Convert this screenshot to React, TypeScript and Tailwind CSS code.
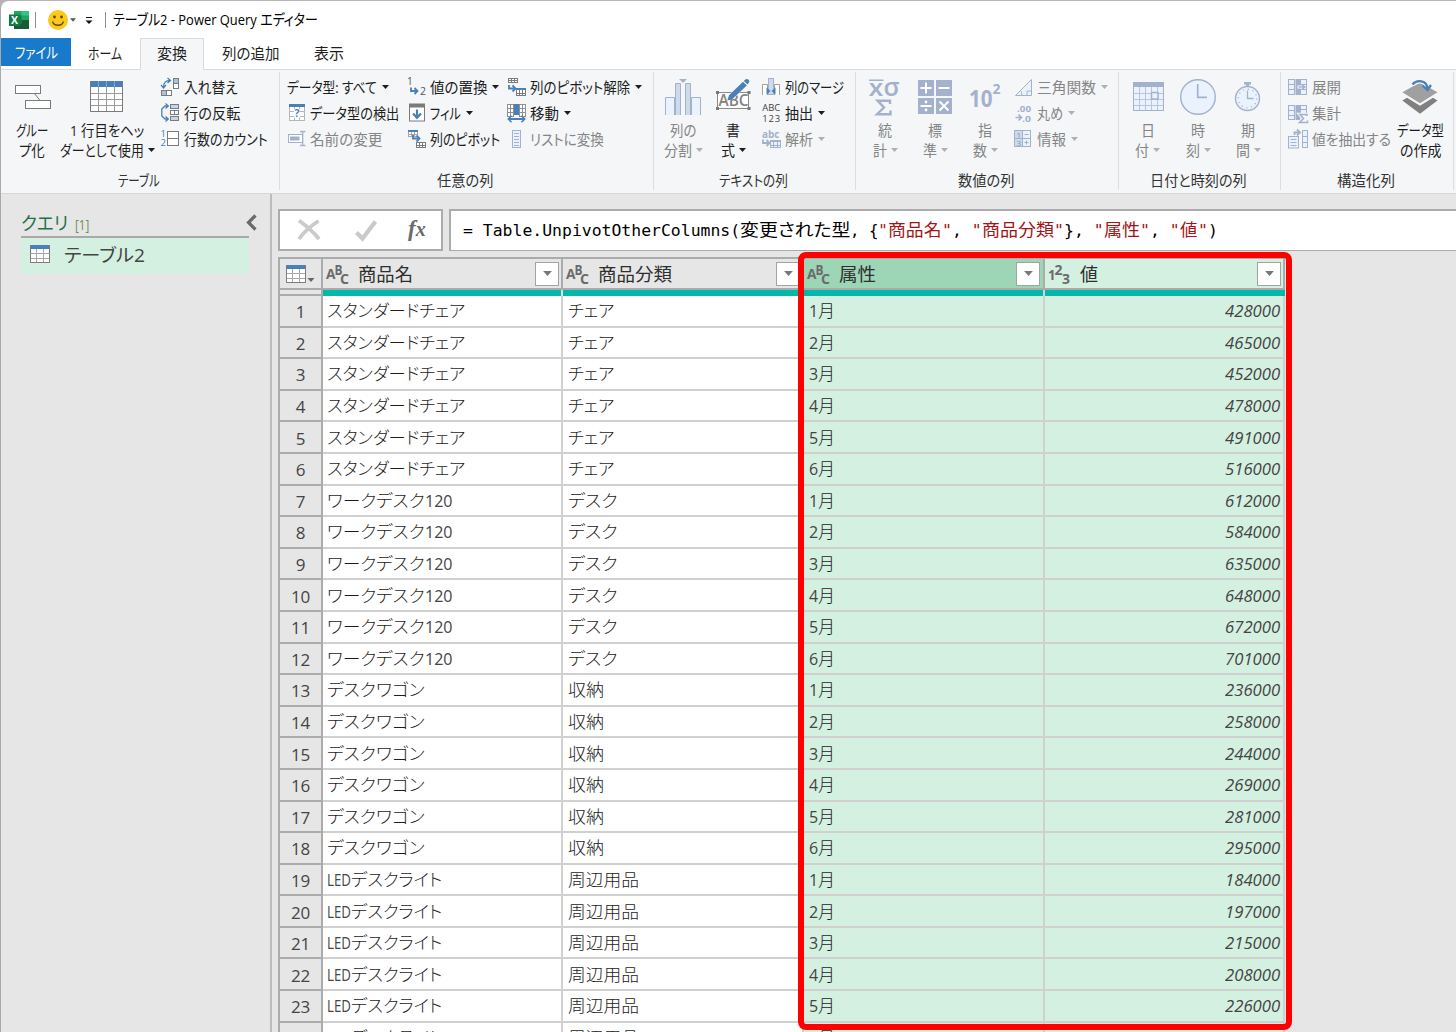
import { useLayoutEffect, useRef, useState } from "react";
import type { ReactNode } from "react";
import clsx from "clsx";

const BLUE = "#4a80b8";
const MUTED = "#a3b1cc";
const PALE = "#eaf3fd";
const GRAY = "#7b7b7b";

// squeezes or stretches its text to the width given by className
const Fit = ({ className, children }: { className?: string; children: ReactNode }) => {
  const outer = useRef<HTMLSpanElement>(null);
  const inner = useRef<HTMLSpanElement>(null);
  const [scale, setScale] = useState(1);

  useLayoutEffect(() => {
    if (outer.current && inner.current && inner.current.offsetWidth > 0) {
      setScale(outer.current.clientWidth / inner.current.offsetWidth);
    }
  }, []);

  return (
    <span ref={outer} className={clsx("block shrink-0 whitespace-pre", className)}>
      <span ref={inner} className="inline-block origin-left" style={{ transform: `scaleX(${scale})` }}>
        {children}
      </span>
    </span>
  );
};

const Caret = ({ className }: { className?: string }) => (
  <svg width="7" height="4" viewBox="0 0 7 4" className={clsx("shrink-0", className)}>
    <path d="M0 0h7L3.5 4z" fill="currentColor" />
  </svg>
);

type GridProps = {
  x: number;
  y: number;
  w: number;
  h: number;
  cols: number;
  rows: number;
  head?: number;
  headFill?: string;
  stroke?: string;
  fill?: string;
};

const Grid = ({ x, y, w, h, cols, rows, head = 0, headFill = BLUE, stroke = GRAY, fill = "#fff" }: GridProps) => (
  <g shapeRendering="crispEdges">
    <rect x={x + 0.5} y={y + 0.5} width={w - 1} height={h - 1} fill={fill} stroke={stroke} />
    {Array.from({ length: cols - 1 }, (_, i) => {
      const cx = x + 0.5 + ((w - 1) * (i + 1)) / cols;
      return <path key={i} d={`M${cx} ${y + head}V${y + h}`} stroke={stroke} />;
    })}
    {Array.from({ length: rows - 1 }, (_, i) => {
      const cy = y + head + ((h - head) * (i + 1)) / rows;
      return <path key={i} d={`M${x} ${cy}H${x + w}`} stroke={stroke} />;
    })}
    {head > 0 && <rect x={x} y={y} width={w} height={head} fill={headFill} />}
  </g>
);

const Svg = ({ size = 20, children }: { size?: number; children: ReactNode }) => (
  <svg width={size} height={size} viewBox={`0 0 ${size} ${size}`} fill="none" className="shrink-0 overflow-visible">
    {children}
  </svg>
);

const HookArrow = ({ x, y, color = BLUE }: { x: number; y: number; color?: string }) => (
  <g transform={`translate(${x} ${y})`} stroke={color} strokeWidth="1.8">
    <path d="M1 0v3.5h6" />
    <path d="M4.5 0.5l3 3-3 3" />
  </g>
);

const icons = {
  group: (
    <Svg size={36}>
      <path d="M20.5 14.5l5.5 7" stroke={GRAY} />
      <rect x="1.5" y="6.5" width="25" height="8" fill="#fff" stroke={GRAY} />
      <rect x="11.5" y="21.5" width="25" height="8" fill="#fff" stroke={GRAY} />
    </Svg>
  ),
  headerTable: (
    <Svg size={36}>
      <Grid x={1} y={2} w={33} h={31} cols={4} rows={4} head={6} stroke="#9a9a9a" />
      <path d="M9.5 2v6M17.5 2v6M25.5 2v6" stroke="#7fa6cf" />
      <path d="M1.5 2v30.5h32V2" stroke={GRAY} />
    </Svg>
  ),
  transpose: (
    <Svg>
      <rect x="12.5" y="1.5" width="5" height="10" fill="#fff" stroke={GRAY} />
      <rect x="12.5" y="1.5" width="5" height="5" fill="#a9c1e2" stroke={GRAY} />
      <rect x="0.5" y="13.5" width="10" height="5" fill="#fff" stroke={GRAY} />
      <rect x="0.5" y="13.5" width="5" height="5" fill="#a9c1e2" stroke={GRAY} />
      <path d="M2.5 10C2.5 6 5 3.5 9 3.5M6.5 1l3 2.5-3 2.5M0 8l2.5 3L5 8" stroke={BLUE} strokeWidth="1.3" />
    </Svg>
  ),
  reverse: (
    <Svg>
      <rect x="9.5" y="1.5" width="8" height="4" fill="#c3d5ec" stroke={GRAY} />
      <rect x="9.5" y="7.5" width="8" height="4" fill="#fff" stroke={GRAY} />
      <path d="M13.5 7.5v4" stroke={GRAY} />
      <rect x="9.5" y="13.5" width="8" height="4" fill="#c3d5ec" stroke={GRAY} />
      <path d="M7 3H4L.8 6v7L4 16h3M4.5 .5L7.3 3 4.5 5.5M4.5 13.5l2.8 2.5-2.8 2.5" stroke={BLUE} strokeWidth="1.3" />
    </Svg>
  ),
  count: (
    <Svg>
      <text x="-0.5" y="8.3" fontSize="9.5" fill={BLUE}>1</text>
      <text x="-0.5" y="17.3" fontSize="9.5" fill={BLUE}>2</text>
      <rect x="6.5" y="2.5" width="11" height="14" fill="#fff" stroke={GRAY} />
      <path d="M6.5 9.5h11" stroke={GRAY} />
    </Svg>
  ),
  detect: (
    <Svg>
      <Grid x={2} y={1} w={16} h={17} cols={3} rows={3} head={3} stroke="#b5b5b5" />
      <rect x="7" y="6" width="6" height="8.5" fill="#fff" />
      <text x="7.5" y="14" fontSize="10.5" fontWeight="700" fill={BLUE}>?</text>
    </Svg>
  ),
  rename: (
    <Svg>
      <rect x="1.5" y="5.5" width="14" height="8" fill="#fff" stroke={MUTED} />
      <path d="M3 7.5h9.5v4H3z" fill={MUTED} />
      <path d="M13 2.5h2l.7.7.7-.7h2M15.7 3v13M13 16.5h2l.7-.7.7.7h2" stroke={MUTED} strokeWidth="1.3" />
    </Svg>
  ),
  replace: (
    <Svg>
      <text x="0" y="8.3" fontSize="10" fill="#555">1</text>
      <HookArrow x={3} y={10.5} />
      <text x="13" y="18.3" fontSize="10.5" fill="#555">2</text>
    </Svg>
  ),
  fill: (
    <Svg>
      <rect x="2.5" y="1.5" width="15" height="16.5" fill="#fff" stroke={GRAY} />
      <path d="M2 .5h16v4H2z" fill={GRAY} />
      <path d="M10 6.5v8M6 10.5l4 4.3 4-4.3" stroke={BLUE} strokeWidth="2.2" />
    </Svg>
  ),
  pivot: (
    <Svg>
      <Grid x={1} y={1} w={10} h={7} cols={3} rows={2} head={2} stroke="#a9a9a9" />
      <HookArrow x={5} y={6} />
      <Grid x={9} y={13} w={10} h={6} cols={3} rows={2} stroke={GRAY} />
    </Svg>
  ),
  unpivot: (
    <Svg>
      <Grid x={1} y={1} w={10} h={5} cols={3} rows={2} stroke={GRAY} />
      <HookArrow x={1} y={8} />
      <Grid x={9} y={11} w={10} h={8} cols={3} rows={2} head={2} stroke={GRAY} />
    </Svg>
  ),
  move: (
    <Svg>
      <Grid x={0} y={1} w={7} h={13} cols={2} rows={3} stroke="#8f8f8f" />
      <Grid x={12} y={1} w={7} h={13} cols={2} rows={3} stroke="#8f8f8f" />
      <path d="M7 1h5v11H7z" fill={BLUE} />
      <path d="M1.5 16h16" stroke={BLUE} strokeWidth="1.8" />
      <path d="M4.5 12.8L1.3 16l3.2 3.2M14.5 12.8l3.2 3.2-3.2 3.2" stroke={BLUE} strokeWidth="1.6" />
    </Svg>
  ),
  list: (
    <Svg>
      <rect x="5.5" y="1.5" width="8" height="17" fill={PALE} stroke={MUTED} />
      <path d="M7 4.5h5M7 7.5h5M7 10.5h5M7 13.5h5M7 16.5h5" stroke={MUTED} />
    </Svg>
  ),
  split: (
    <Svg size={36}>
      <path d="M.5 36V18.5h9V36M26.5 36V18.5h9V36" fill={PALE} stroke={MUTED} />
      <path d="M10.5 36V4.5h5V36M20.5 36V4.5h5V36" fill="#cddaec" stroke={MUTED} />
      <path d="M14 0h8l-4 4z" fill={MUTED} />
    </Svg>
  ),
  format: (
    <Svg size={36}>
      <rect x="2.5" y="13.5" width="31" height="16" fill="#fff" stroke="#8a8a8a" />
      <path d="M1 12h3v3H1zM32.5 12h3v3h-3zM1 28h3v3H1zM32.5 28h3v3h-3z" fill="#777" />
      <text x="3.5" y="26.5" fontSize="15.5" fontWeight="600" fill="#828282" textLength="30" lengthAdjust="spacingAndGlyphs">ABC</text>
      <path d="M15.5 18.500L29 5" stroke="#f4f6f8" strokeWidth="6" />
      <path d="M12.3 21.5l1.700-5.300L28 2.800l3.800 3.700L17.500 20zM28.800 2l1.500-1.400c1-.9 2.500-.6 3.300.2s1 2.100.2 3L32.500 5.500z" fill={BLUE} />
    </Svg>
  ),
  merge: (
    <Svg>
      <path d="M.5 18V7.5h5V18M12.5 18V7.5h5V18" fill="#fff" stroke="#a0a0a0" />
      <rect x="6.500" y="1.500" width="5" height="16" fill="#cddaec" stroke={MUTED} />
      <path d="M4.500 10.500l4 3.500-4 3.500zM13.500 10.500l-4 3.500 4 3.500z" fill={BLUE} />
    </Svg>
  ),
  extract: (
    <Svg>
      <text x="0.3" y="8" fontSize="9.5" fill="#444" textLength="18" lengthAdjust="spacingAndGlyphs">ABC</text>
      <text x="0.3" y="18.7" fontSize="9.5" fill="#444" textLength="18" lengthAdjust="spacing">123</text>
    </Svg>
  ),
  parse: (
    <Svg>
      <text x="0" y="8.5" fontSize="10.5" fontWeight="700" fill={MUTED} textLength="17.5" lengthAdjust="spacingAndGlyphs">abc</text>
      <HookArrow x={0} y={10.5} color={MUTED} />
      <Grid x={8} y={11} w={11} h={8} cols={3} rows={2} head={2} headFill={MUTED} stroke={MUTED} fill={PALE} />
    </Svg>
  ),
  stats: (
    <Svg size={36}>
      <path d="M2 1.3h14.500" stroke={MUTED} strokeWidth="1.5" />
      <text x="2" y="16.5" fontSize="18.5" fontWeight="700" fill={MUTED} textLength="14" lengthAdjust="spacingAndGlyphs">X</text>
      <text x="16.5" y="16.5" fontSize="25" fontWeight="600" fill={MUTED} textLength="16" lengthAdjust="spacingAndGlyphs">σ</text>
      <path d="M23 25v-3.300H10.500l6.500 6.800-7 6.700h13.500V31.500" stroke={MUTED} strokeWidth="2.4" />
    </Svg>
  ),
  standard: (
    <Svg size={36}>
      <path d="M1 1h16v16H1zM19 1h16v16H19zM1 19h16v16H1zM19 19h16v16H19z" fill={MUTED} />
      <path d="M3.5 9h11M9 3.5v11M21.5 9h11M3.5 27h11M22.5 22.5l9 9M31.5 22.5l-9 9" stroke="#fff" strokeWidth="2" />
      <circle cx="9" cy="23" r="1.4" fill="#fff" />
      <circle cx="9" cy="31" r="1.4" fill="#fff" />
    </Svg>
  ),
  exponent: (
    <Svg size={36}>
      <text x="2" y="28.3" fontSize="22.5" fontWeight="700" fill={MUTED} textLength="23.5" lengthAdjust="spacingAndGlyphs">10</text>
      <text x="25.5" y="15" fontSize="14" fontWeight="700" fill={MUTED}>2</text>
    </Svg>
  ),
  trig: (
    <Svg>
      <path d="M1.5 18.5h16v-16z" fill={PALE} stroke={MUTED} />
      <path d="M13 18.5v-4.5h4.5M6.5 13.5c1 1 1.5 3 1.3 5" stroke={MUTED} />
    </Svg>
  ),
  rounding: (
    <Svg>
      <text x="3" y="8.5" fontSize="9.5" fontWeight="700" fill={MUTED} textLength="14" lengthAdjust="spacingAndGlyphs">.00</text>
      <text x="8" y="18.5" fontSize="9.5" fontWeight="700" fill={MUTED} textLength="9" lengthAdjust="spacingAndGlyphs">.0</text>
      <path d="M1.5 14.5h6M4.5 11.5l3 3-3 3" stroke={MUTED} strokeWidth="1.7" />
    </Svg>
  ),
  info: (
    <Svg>
      <rect x=".5" y="1.5" width="16" height="16" fill={PALE} stroke={MUTED} />
      <path d="M1 2h7.5v15H1z" fill="#cddaec" />
      <path d="M8.5 1.5v16M.5 9.5h16M10.5 5.5h4M10.5 13.5h4M12.5 11.5v4" stroke={MUTED} />
      <text x="2.5" y="8.5" fontSize="8" fill="#8094bb">1</text>
      <text x="2.5" y="16.5" fontSize="8" fill="#8094bb">3</text>
    </Svg>
  ),
  date: (
    <Svg size={36}>
      <Grid x={3} y={3} w={31} h={29} cols={5} rows={4} head={5} headFill={MUTED} stroke="#b9c5da" fill={PALE} />
      <rect x="21.5" y="13.5" width="6.5" height="6.500" fill={PALE} stroke={MUTED} strokeWidth="1.5" />
      <path d="M3.5 3v28.5h30V3" stroke={MUTED} />
    </Svg>
  ),
  time: (
    <Svg size={36}>
      <circle cx="18" cy="18" r="17.3" fill={PALE} stroke={MUTED} strokeWidth="1.4" />
      <path d="M17.7 5v13.3H27" stroke={MUTED} strokeWidth="1.7" />
    </Svg>
  ),
  duration: (
    <Svg size={36}>
      <path d="M14 3h7v2.5h-2V7h-3V5.5h-2z" fill={MUTED} />
      <circle cx="17.5" cy="19.5" r="12" fill={PALE} stroke={MUTED} strokeWidth="1.4" />
      <circle cx="17.5" cy="19.5" r="9.3" stroke={MUTED} strokeWidth="1.2" strokeDasharray="1.2 3.67" />
      <path d="M17.5 11.5v8h6" stroke={MUTED} strokeWidth="1.3" />
    </Svg>
  ),
  expand: (
    <Svg>
      <Grid x={-1} y={2} w={7} h={16} cols={1} rows={3} stroke={MUTED} fill={PALE} />
      <Grid x={11} y={2} w={7} h={16} cols={1} rows={3} stroke={MUTED} fill={PALE} />
      <path d="M6.5 2h5v16h-5z" fill={MUTED} />
      <path d="M8.5 10h7" stroke="#fff" strokeWidth="3" />
      <path d="M9.5 10h6M13 7.5l2.8 2.5-2.8 2.5" stroke={MUTED} strokeWidth="1.5" />
    </Svg>
  ),
  aggregate: (
    <Svg>
      <Grid x={-1} y={2} w={7} h={15} cols={1} rows={3} stroke={MUTED} fill={PALE} />
      <Grid x={11} y={2} w={7} h={9} cols={1} rows={2} stroke={MUTED} fill={PALE} />
      <path d="M6.5 2h5v15h-5z" fill={MUTED} />
      <path d="M18.5 13.5v-2h-7.5l3.5 4-4 4h8.5v-2" stroke="#f4f6f8" strokeWidth="3.5" />
      <path d="M18 13v-1.500h-7l3.500 4-4 4h8v-2" stroke={MUTED} strokeWidth="1.6" />
    </Svg>
  ),
  values: (
    <Svg>
      <rect x="-.5" y="7.5" width="10" height="11.5" fill={PALE} stroke={MUTED} />
      <path d="M1.5 10.5h6M1.5 13.5h6M1.5 16.5h6" stroke={MUTED} />
      <path d="M5.5 6V3.5h4.5M8 .5l3 3-3 2.800" stroke={MUTED} strokeWidth="1.8" />
      <Grid x={13} y={1} w={6} h={18} cols={1} rows={3} stroke={MUTED} fill={PALE} />
    </Svg>
  ),
  dataType: (
    <Svg size={36}>
      <path d="M.3 21.500L5 18.8l13 8 13-8 4.500 2.700L18 34.700z" fill="#808080" />
      <path d="M.3 13.3L18 3.500l17.500 9.800L18 24.300z" fill="#a0a0a0" />
      <path d="M10.5 5.500C15 .3 25 1 25.800 10" stroke="#f4f6f8" strokeWidth="4.5" />
      <path d="M10.5 5.500C15 .3 25 1 25.500 10M20.500 6.500l5 4.500 3.500-5" stroke={BLUE} strokeWidth="2.3" />
    </Svg>
  ),
  table: (
    <Svg>
      <Grid x={0} y={1} w={20} h={18} cols={3} rows={3} head={4} stroke="#a8a8a8" />
      <path d="M.5 1v17.5h19V1" stroke={GRAY} />
    </Svg>
  ),
};

type IconName = keyof typeof icons;

type SmallProps = { icon?: IconName; text: string; width: string; caret?: boolean; disabled?: boolean };

const SmallButton = ({ icon, text, width, caret, disabled }: SmallProps) => (
  <div className={clsx("flex h-[26px] items-center", disabled ? "text-[#858585]" : "text-[#1e1e1e]")}>
    {icon && <div className="w-[23px] shrink-0">{icons[icon]}</div>}
    <Fit className={width}>{text}</Fit>
    {caret && <Caret className={clsx("ml-[5px]", disabled && "text-[#b0b0b0]")} />}
  </div>
);

type BigProps = {
  icon: IconName;
  lines: [string, string];
  widths: [string, string];
  className?: string;
  caret?: boolean;
  disabled?: boolean;
};

const BigButton = ({ icon, lines, widths, className = "w-[50px]", caret, disabled }: BigProps) => (
  <div className={clsx("flex shrink-0 flex-col items-center", className, disabled ? "text-[#858585]" : "text-[#1e1e1e]")}>
    <div className="flex h-[46px] items-center">{icons[icon]}</div>
    <div className="flex h-5 items-center">
      <Fit className={widths[0]}>{lines[0]}</Fit>
    </div>
    <div className="flex h-5 items-center gap-[4px]">
      <Fit className={widths[1]}>{lines[1]}</Fit>
      {caret && <Caret className={disabled ? "text-[#b0b0b0]" : ""} />}
    </div>
  </div>
);

const RibbonGroup = ({ label, labelWidth, className, children }: { label: string; labelWidth: string; className: string; children: ReactNode }) => (
  <div className={clsx("flex h-[118px] shrink-0 flex-col border-r border-[#dcdee0] pt-0.5", className)}>
    <div className="flex h-24">{children}</div>
    <div className="flex h-[21px] items-center justify-center pr-[3px] text-[#333]">
      <Fit className={labelWidth}>{label}</Fit>
    </div>
  </div>
);

const Ribbon = () => (
  <div className="flex h-[124px] shrink-0 border-b border-[#d4d6d8] bg-[#f4f6f8] pt-0.5 text-[15px] leading-5">
    <RibbonGroup label="テーブル" labelWidth="w-[42px]" className="w-[279px]">
      <BigButton icon="group" lines={["グルー", "プ化"]} widths={["w-[32px]", "w-[26px]"]} className="ml-1.5 w-[50px]" />
      <BigButton icon="headerTable" lines={["1 行目をヘッ", "ダーとして使用"]} widths={["w-[74px]", "w-[84px]"]} className="w-[100px]" caret />
      <div className="ml-1">
        <SmallButton icon="transpose" text="入れ替え" width="w-[54px]" />
        <SmallButton icon="reverse" text="行の反転" width="w-[56px]" />
        <SmallButton icon="count" text="行数のカウント" width="w-[84px]" />
      </div>
    </RibbonGroup>
    <RibbonGroup label="任意の列" labelWidth="w-[56px]" className="w-[374px]">
      <div className="ml-[7px] w-[120px]">
        <SmallButton text="データ型: すべて" width="w-[90px]" caret />
        <SmallButton icon="detect" text="データ型の検出" width="w-[89px]" />
        <SmallButton icon="rename" text="名前の変更" width="w-[72px]" disabled />
      </div>
      <div className="w-[100px]">
        <SmallButton icon="replace" text="値の置換" width="w-[57px]" caret />
        <SmallButton icon="fill" text="フィル" width="w-[31px]" caret />
        <SmallButton icon="pivot" text="列のピボット" width="w-[70px]" />
      </div>
      <div>
        <SmallButton icon="unpivot" text="列のピボット解除" width="w-[100px]" caret />
        <SmallButton icon="move" text="移動" width="w-[29px]" caret />
        <SmallButton icon="list" text="リストに変換" width="w-[74px]" disabled />
      </div>
    </RibbonGroup>
    <RibbonGroup label="テキストの列" labelWidth="w-[69px]" className="w-[202px]">
      <BigButton icon="split" lines={["列の", "分割"]} widths={["w-[26px]", "w-[28px]"]} className="ml-1 w-[50px]" caret disabled />
      <BigButton icon="format" lines={["書", "式"]} widths={["w-[14px]", "w-[14px]"]} caret />
      <div className="ml-1">
        <SmallButton icon="merge" text="列のマージ" width="w-[59px]" />
        <SmallButton icon="extract" text="抽出" width="w-[28px]" caret />
        <SmallButton icon="parse" text="解析" width="w-[28px]" caret disabled />
      </div>
    </RibbonGroup>
    <RibbonGroup label="数値の列" labelWidth="w-[56px]" className="w-[263px]">
      <BigButton icon="stats" lines={["統", "計"]} widths={["w-[14px]", "w-[14px]"]} className="ml-1 w-[50px]" caret disabled />
      <BigButton icon="standard" lines={["標", "準"]} widths={["w-[14px]", "w-[14px]"]} caret disabled />
      <BigButton icon="exponent" lines={["指", "数"]} widths={["w-[14px]", "w-[14px]"]} caret disabled />
      <div className="ml-1">
        <SmallButton icon="trig" text="三角関数" width="w-[59px]" caret disabled />
        <SmallButton icon="rounding" text="丸め" width="w-[26px]" caret disabled />
        <SmallButton icon="info" text="情報" width="w-[29px]" caret disabled />
      </div>
    </RibbonGroup>
    <RibbonGroup label="日付と時刻の列" labelWidth="w-[97px]" className="w-[162px]">
      <BigButton icon="date" lines={["日", "付"]} widths={["w-[14px]", "w-[14px]"]} className="ml-[3px] w-[51px]" caret disabled />
      <BigButton icon="time" lines={["時", "刻"]} widths={["w-[14px]", "w-[14px]"]} caret disabled />
      <BigButton icon="duration" lines={["期", "間"]} widths={["w-[14px]", "w-[14px]"]} caret disabled />
    </RibbonGroup>
    <RibbonGroup label="構造化列" labelWidth="w-[58px]" className="w-[173px]">
      <div className="ml-2 w-[106px]">
        <SmallButton icon="expand" text="展開" width="w-[29px]" disabled />
        <SmallButton icon="aggregate" text="集計" width="w-[29px]" disabled />
        <SmallButton icon="values" text="値を抽出する" width="w-[79px]" disabled />
      </div>
      <BigButton icon="dataType" lines={["データ型", "の作成"]} widths={["w-[47px]", "w-[41px]"]} />
    </RibbonGroup>
  </div>
);

const TitleBar = () => (
  <div className="flex h-[37px] shrink-0 items-center pl-2">
    <svg width="20" height="18" viewBox="0 0 20 18">
      <path d="M5 0h15v18H5z" fill="#21a366" />
      <path d="M12.5 0H20v4.5h-7.5z" fill="#33c481" />
      <path d="M5 4.5h7.5V13H5z" fill="#107c41" />
      <path d="M5 13h15v5H5zM12.5 9H20v4h-7.5z" fill="#185c37" />
      <rect y="3.5" width="11" height="11.5" fill="#107c41" />
      <text x="2" y="13" fontSize="10.5" fontWeight="700" fill="#fff">X</text>
    </svg>
    <div className="ml-1.5 h-4 w-px bg-[#8f8f8f]" />
    <svg width="20" height="20" viewBox="0 0 20 20" className="ml-3 mt-px">
      <circle cx="10" cy="10" r="10" fill="#fcc81b" />
      <circle cx="6.5" cy="7" r="1.4" fill="#5d4a10" />
      <circle cx="13.5" cy="7" r="1.4" fill="#5d4a10" />
      <path d="M4.5 11.5c1.5 5 9.500 5 11 0" fill="none" stroke="#5d4a10" strokeWidth="1.3" />
    </svg>
    <Caret className="ml-[2px] w-[6px] text-[#555]" />
    <svg width="8" height="8" viewBox="0 0 8 8" className="ml-[9px] mt-0.5">
      <path d="M1 .5h6" stroke="#111" strokeWidth="1.2" />
      <path d="M.5 3.5h7L4 7z" fill="#111" />
    </svg>
    <div className="ml-3 h-4 w-px bg-[#8f8f8f]" />
    <Fit className="ml-[7px] w-[205px] pb-0.5 text-[15px] leading-5 text-black">テーブル2 - Power Query エディター</Fit>
  </div>
);

const Tabs = () => (
  <div className="flex h-8 shrink-0 text-[15px] leading-5 text-[#1e1e1e]">
    <div className="flex w-[70px] justify-center border-b border-[#d9dadc]">
      <div className="flex h-7 w-full items-center justify-center bg-[#1979ca] text-white">
        <Fit className="w-[43px]">ファイル</Fit>
      </div>
    </div>
    <div className="flex w-[69px] items-center justify-center border-b border-[#d9dadc] pb-0.5 pr-0.5">
      <Fit className="w-[34px]">ホーム</Fit>
    </div>
    <div className="flex w-16 items-center justify-center border-x border-t border-[#d9dadc] bg-[#f4f6f8] pb-1">
      <Fit className="w-[30px]">変換</Fit>
    </div>
    <div className="flex flex-1 items-center border-b border-[#d9dadc] pb-0.5 pl-[18px]">
      <Fit className="w-[57px]">列の追加</Fit>
      <Fit className="ml-[35px] w-[30px]">表示</Fit>
    </div>
  </div>
);

const Sidebar = () => (
  <aside className="w-[271px] shrink-0 border-r-2 border-[#bcbcbc] pl-5">
    <div className="flex h-11 w-[228px] items-end border-b-2 border-[#a9a9a9] text-[#217346]">
      <Fit className="-mb-px w-[47px] text-lg leading-7">クエリ</Fit>
      <Fit className="ml-[7px] w-[14px] text-[15px] leading-6 text-[#6b8f5a]">[1]</Fit>
      <svg width="11" height="17" viewBox="0 0 11 17" className="mb-[5px] ml-[157px] shrink-0">
        <path d="M9.5 1.5l-7 7 7 7" fill="none" stroke="#6a6a6a" strokeWidth="3.2" />
      </svg>
    </div>
    <div className="flex h-9 w-[228px] items-center bg-[#d4f0e1] pl-[9px] text-[#444]">
      <div className="pb-1">{icons.table}</div>
      <Fit className="ml-[14px] w-[81px] pb-[3px] text-lg leading-7">テーブル2</Fit>
    </div>
  </aside>
);

const FormulaBar = () => (
  <div className="flex h-[42px] shrink-0">
    <div className="relative flex w-[165px] items-center border-2 border-[#ababab] bg-white">
      <svg width="161" height="38" viewBox="0 0 161 38" fill="none">
        <path d="M19 9.5c6 4.500 15 12 20 18.500M38.500 10C32 14 24 21 19 28" stroke="#cacaca" strokeWidth="3.8" />
        <path d="M76.5 21.5l6 6L95.5 10.5" stroke="#cacaca" strokeWidth="4.2" />
      </svg>
      <span className="absolute left-[128px] top-[4px] font-['Liberation_Serif',serif] text-[23px] font-bold italic leading-7 text-[#6a6a6a]">
        f<span className="text-xl">x</span>
      </span>
    </div>
    <div className="ml-1.5 flex flex-1 items-center border-b border-l-2 border-t-2 border-[#ababab] bg-white pl-3 font-['DejaVu_Sans_Mono','Noto_Sans_CJK_JP',monospace] text-[16.5px] leading-6 text-black">
      <Fit className="w-[277px]">= Table.UnpivotOtherColumns(</Fit>
      <Fit className="w-[110px]">変更された型</Fit>
      <Fit className="w-[38px]">, {"{"}<span className="text-[#a31515]">"</span></Fit>
      <Fit className="w-[54px] text-[#a31515]">商品名</Fit>
      <Fit className="w-[40px]"><span className="text-[#a31515]">"</span>, <span className="text-[#a31515]">"</span></Fit>
      <Fit className="w-[72px] text-[#a31515]">商品分類</Fit>
      <Fit className="w-[50px]"><span className="text-[#a31515]">"</span>{"}"}, <span className="text-[#a31515]">"</span></Fit>
      <Fit className="w-[36px] text-[#a31515]">属性</Fit>
      <Fit className="w-[40px]"><span className="text-[#a31515]">"</span>, <span className="text-[#a31515]">"</span></Fit>
      <Fit className="w-[18px] text-[#a31515]">値</Fit>
      <Fit className="w-[20px]"><span className="text-[#a31515]">"</span>)</Fit>
    </div>
  </div>
);

const columns = [
  { name: "商品名", nameWidth: "w-[55px]", type: "ABC", cell: "w-[240px] bg-[#e6e6e6] pr-[2px]" },
  { name: "商品分類", nameWidth: "w-[74px]", type: "ABC", cell: "w-[241px] bg-[#e6e6e6] pr-[2px]" },
  { name: "属性", nameWidth: "w-[37px]", type: "ABC", cell: "w-[241px] bg-[#9dd5b7] pr-[3px]" },
  { name: "値", nameWidth: "w-[18px]", type: "123", cell: "w-[240px] bg-[#d4f0e1] pr-[2px]" },
];

const products = [
  { prefix: "", name: "スタンダードチェア", nameWidth: "w-[138px]", suffix: "", kind: "チェア", kindWidth: "w-[46px]", values: [428000, 465000, 452000, 478000, 491000, 516000] },
  { prefix: "", name: "ワークデスク", nameWidth: "w-[98px]", suffix: "120", kind: "デスク", kindWidth: "w-[49px]", values: [612000, 584000, 635000, 648000, 672000, 701000] },
  { prefix: "", name: "デスクワゴン", nameWidth: "w-[98px]", suffix: "", kind: "収納", kindWidth: "w-[36px]", values: [236000, 258000, 244000, 269000, 281000, 295000] },
  { prefix: "LED", name: "デスクライト", nameWidth: "w-[91px]", suffix: "", kind: "周辺用品", kindWidth: "w-[71px]", values: [184000, 197000, 215000, 208000, 226000, 231000] },
];

const rows = products.flatMap((p) => p.values.map((value, i) => ({ ...p, value, month: i + 1 })));

const TypeBadge = ({ type }: { type: string }) => (
  <svg width="24" height="24" viewBox="0 0 24 24" fill="#6b6b6b" fontWeight="700" className="shrink-0 overflow-visible">
    {type === "ABC" ? (
      <>
        <text x="0" y="17" fontSize="14" textLength="9.5" lengthAdjust="spacingAndGlyphs">A</text>
        <text x="8.5" y="12.5" fontSize="13.5" textLength="8" lengthAdjust="spacingAndGlyphs">B</text>
        <text x="14" y="22" fontSize="13.5" textLength="9" lengthAdjust="spacingAndGlyphs">C</text>
      </>
    ) : (
      <>
        <text x="0" y="17.5" fontSize="15" textLength="7.5" lengthAdjust="spacingAndGlyphs">1</text>
        <text x="6.5" y="12.8" fontSize="14.5" textLength="8" lengthAdjust="spacingAndGlyphs">2</text>
        <text x="14" y="22" fontSize="14.5" textLength="8" lengthAdjust="spacingAndGlyphs">3</text>
      </>
    )}
  </svg>
);

const DataGrid = () => (
  <div className="relative mt-1.5 w-[1007px] border-l-2 border-t-2 border-[#ababab]">
    <div className="flex h-[31px]">
      <div className="flex w-[43px] items-center border-b-2 border-r-2 border-[#ababab] pl-1.5">
        {icons.table}
        <Caret className="ml-px mt-3 w-2 text-[#666]" />
      </div>
      {columns.map((col) => (
        <div key={col.name} className={clsx("flex shrink-0 items-center border-b-2 border-r-2 border-[#ababab] pl-[3px]", col.cell)}>
          <TypeBadge type={col.type} />
          <Fit className={clsx("ml-[8px] text-lg leading-6 text-[#2e2e2e]", col.nameWidth)}>{col.name}</Fit>
          <div className="ml-auto flex size-6 items-center justify-center border border-[#a3a3a3] bg-white text-[#777]">
            <Caret className="h-[5px] w-[9px]" />
          </div>
        </div>
      ))}
    </div>
    <div className="flex h-1.5">
      <div className="w-[43px] border-b-2 border-r-2 border-[#ababab]" />
      <div className="w-[240px] border-r-2 border-[#e0e0e0] bg-[#01b8aa]" />
      <div className="w-[241px] border-r-2 border-[#e0e0e0] bg-[#01b8aa]" />
      <div className="w-[241px] border-r-2 border-[#d3d3d3] bg-[#01b8aa]" />
      <div className="w-[240px] bg-[#01b8aa]" />
    </div>
    {rows.map((row, i) => (
      <div key={i} className="flex h-[31.6px] text-[17px] leading-6 text-[#444]">
        <div className="flex w-[43px] items-center justify-center border-b-2 border-r-2 border-[#ababab] pt-[3px]">
          <span className="tracking-[-0.3px]">{i + 1}</span>
        </div>
        <div className="flex w-[240px] items-center border-b-2 border-r-2 border-[#d0d0d0] bg-white pl-1 pt-px">
          {row.prefix && <Fit className="w-[24px] text-base leading-6">{row.prefix}</Fit>}
          <Fit className={clsx("font-light text-[#1c1c1c]", row.nameWidth)}>{row.name}</Fit>
          {row.suffix && <Fit className="w-[27px] text-base leading-6">{row.suffix}</Fit>}
        </div>
        <div className="flex w-[241px] items-center border-b-2 border-r-2 border-[#d0d0d0] bg-white pl-[5px] pt-px font-light text-[#1c1c1c]">
          <Fit className={row.kindWidth}>{row.kind}</Fit>
        </div>
        <div className="flex w-[241px] items-center border-b-2 border-r-2 border-[#d0d0d0] bg-[#d4f0e1] pl-[5px] pt-px">
          <Fit className="w-[9px] text-base leading-6">{row.month}</Fit>
          <Fit className="w-[17px] font-light text-[#1c1c1c]">月</Fit>
        </div>
        <div className="flex w-[240px] items-center justify-end border-b-2 border-r-2 border-[#d0d0d0] bg-[#d4f0e1] pr-[3px] pt-px">
          <Fit className="w-[55px] text-[15.5px] italic">{row.value}</Fit>
        </div>
      </div>
    ))}
    {/* callout around the unpivoted columns */}
    <div className="absolute -top-[7px] left-[518px] h-[778px] w-[494px] rounded-lg border-[6px] border-[#fe0000]" />
  </div>
);

export default function App() {
  return (
    <div className="h-[1032px] w-[1456px] overflow-hidden bg-[#b4b4b4] pt-px font-['Open_Sans','Noto_Sans_CJK_JP',sans-serif] [font-feature-settings:'palt']">
      <div className="flex h-full flex-col overflow-hidden rounded-tl-lg border-l border-[#a9a9a9] bg-white">
        <TitleBar />
        <Tabs />
        <Ribbon />
        <div className="flex min-h-0 flex-1 bg-[#e6e6e6]">
          <Sidebar />
          <main className="flex min-w-0 flex-1 flex-col overflow-hidden pl-1.5 pt-[15px]">
            <FormulaBar />
            <DataGrid />
          </main>
        </div>
      </div>
    </div>
  );
}
